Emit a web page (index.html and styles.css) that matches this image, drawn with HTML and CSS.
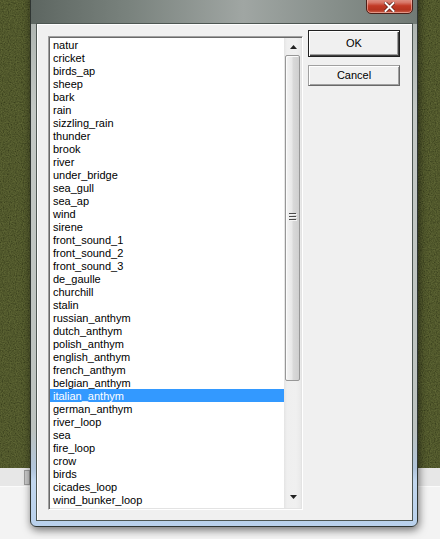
FILE: index.html
```html
<!DOCTYPE html>
<html>
<head>
<meta charset="utf-8">
<link rel="stylesheet" href="styles.css">
</head>
<body>
<svg class="ground" width="440" height="468" aria-hidden="true">
  <filter id="grain">
    <feTurbulence type="fractalNoise" baseFrequency="0.85" numOctaves="2" seed="3"/>
    <feColorMatrix type="matrix" values="0.55 0 0 0 0  0.6 0 0 0 0  0.2 0 0 0 0  0 0 0 0 1"/>
  </filter>
  <rect width="440" height="468" fill="#28300e"/>
  <rect width="440" height="468" filter="url(#grain)" opacity="0.4"/>
</svg>
<div class="behind-handle"></div>

<div class="window">
  <div class="client">
    <div class="listbox">
      <ul class="items">
        <li>natur</li>
        <li>cricket</li>
        <li>birds_ap</li>
        <li>sheep</li>
        <li>bark</li>
        <li>rain</li>
        <li>sizzling_rain</li>
        <li>thunder</li>
        <li>brook</li>
        <li>river</li>
        <li>under_bridge</li>
        <li>sea_gull</li>
        <li>sea_ap</li>
        <li>wind</li>
        <li>sirene</li>
        <li>front_sound_1</li>
        <li>front_sound_2</li>
        <li>front_sound_3</li>
        <li>de_gaulle</li>
        <li>churchill</li>
        <li>stalin</li>
        <li>russian_anthym</li>
        <li>dutch_anthym</li>
        <li>polish_anthym</li>
        <li>english_anthym</li>
        <li>french_anthym</li>
        <li>belgian_anthym</li>
        <li class="selected">italian_anthym</li>
        <li>german_anthym</li>
        <li>river_loop</li>
        <li>sea</li>
        <li>fire_loop</li>
        <li>crow</li>
        <li>birds</li>
        <li>cicades_loop</li>
        <li>wind_bunker_loop</li>
        <li>wind_bunker_inside</li>
      </ul>
      <div class="scrollbar">
        <div class="arrow">
          <svg width="7" height="4" viewBox="0 0 7 4"><polygon points="3.5,0 7,4 0,4" fill="#222"/></svg>
        </div>
        <div class="thumb">
          <svg width="8" height="9" viewBox="0 0 8 9">
            <rect x="0" y="0" width="7" height="1" fill="#4a4a4a"/>
            <rect x="1" y="1" width="7" height="1" fill="#f4f4f4"/>
            <rect x="0" y="3" width="7" height="1" fill="#4a4a4a"/>
            <rect x="1" y="4" width="7" height="1" fill="#f4f4f4"/>
            <rect x="0" y="6" width="7" height="1" fill="#4a4a4a"/>
            <rect x="1" y="7" width="7" height="1" fill="#f4f4f4"/>
          </svg>
        </div>
        <div class="track"></div>
        <div class="arrow down">
          <svg width="7" height="4" viewBox="0 0 7 4"><polygon points="0,0 7,0 3.5,4" fill="#222"/></svg>
        </div>
      </div>
    </div>
    <div class="buttons">
      <div class="btn default">OK</div>
      <div class="btn">Cancel</div>
    </div>
  </div>
</div>

<div class="close">
  <svg width="11" height="10" viewBox="0 0 11 10">
    <path d="M1.5 1 L9.5 9 M9.5 1 L1.5 9" stroke="#5a1a12" stroke-width="3.4" stroke-linecap="square"/>
    <path d="M1.5 1 L9.5 9 M9.5 1 L1.5 9" stroke="#ffffff" stroke-width="2" stroke-linecap="square"/>
  </svg>
</div>
</body>
</html>
```

FILE: styles.css
```css
html, body {
  margin: 0;
  padding: 0;
}

body {
  width: 440px;
  height: 539px;
  overflow: hidden;
  position: relative;
  font-family: "Liberation Sans", Arial, sans-serif;
  font-size: 11px;
  color: #000;
  background: linear-gradient(to bottom,
    #e7e7e7 0, #e7e7e7 486px,
    #fbfbfb 486px, #fbfbfb 487px,
    #f3f3f3 487px, #f3f3f3 100%);
}

.ground {
  position: absolute;
  left: 0;
  top: 0;
  display: block;
}

.behind-handle {
  position: absolute;
  left: 24px;
  top: 470px;
  width: 4px;
  height: 13px;
  background: #c9c9c9;
  border: 1px solid #9c9c9c;
}

.window {
  position: absolute;
  left: 30px;
  top: -10px;
  width: 388px;
  height: 537px;
  box-sizing: border-box;
  border: 1px solid #2f3532;
  border-radius: 0 0 6px 6px;
  padding: 32px 4px 5px 5px;
  background:
    linear-gradient(90deg, #5d6661 0%, #79827d 25%, #a0a6a3 55%, #8a928e 75%, #717a75 100%) top left / 100% 33px no-repeat,
    linear-gradient(to bottom, #a7aeaa 0, #c3c8c5 120px, #bcc2bf 440px, #b2c6dc 478px, #c2d7ee 490px, #b9d1ec 100%);
  box-shadow: 1px 3px 9px rgba(0, 0, 0, 0.55);
}

.client {
  box-sizing: border-box;
  height: 498px;
  border: 1px solid #4d5652;
  background: #f0f0f0;
  box-shadow: inset 1px 1px 0 #ffffff;
  display: flex;
  align-items: flex-start;
  padding: 6px 11px 0 11px;
}

.listbox {
  margin-top: 6px;
  width: 255px;
  height: 474px;
  box-sizing: border-box;
  border: 1px solid;
  border-color: #a0a0a0 #ffffff #ffffff #a0a0a0;
  box-shadow: inset 1px 1px 0 #696969, inset -1px -1px 0 #e3e3e3;
  padding: 1px;
  display: flex;
  background: #fff;
}

.items {
  list-style: none;
  margin: 0;
  padding: 0;
  flex: 1;
  overflow: hidden;
}

.items li {
  height: 13px;
  line-height: 15px;
  padding-left: 3px;
  white-space: nowrap;
  overflow: hidden;
}

.items li.selected {
  background: #3399ff;
  color: #fff;
}

.scrollbar {
  width: 17px;
  display: flex;
  flex-direction: column;
  background: linear-gradient(90deg, #e4e4e4 0, #efefef 3px, #f0f0f0 12px, #e9e9e9 100%);
}

.arrow {
  height: 17px;
  display: flex;
  align-items: center;
  justify-content: center;
  padding-left: 1px;
}

.arrow svg {
  display: block;
}

.thumb {
  height: 326px;
  margin: 0 1px 0 1px;
  box-sizing: border-box;
  border: 1px solid #979797;
  border-radius: 2px;
  background: linear-gradient(90deg, #f4f4f4 0, #e8e8e8 45%, #d9d9d9 55%, #cfcfcf 100%);
  box-shadow: inset 1px 1px 0 #fbfbfb;
  display: flex;
  align-items: center;
  justify-content: center;
  padding-bottom: 2px;
}

.thumb svg {
  display: block;
}

.track {
  flex: 1;
}

.arrow.down {
  height: 15px;
  align-items: flex-start;
  padding-top: 2px;
  box-sizing: border-box;
}

.buttons {
  margin-left: 5px;
  width: 92px;
  display: flex;
  flex-direction: column;
}

.btn {
  box-sizing: border-box;
  height: 21px;
  display: flex;
  align-items: center;
  justify-content: center;
  border: 1px solid;
  border-color: #a0a0a0 #696969 #696969 #a0a0a0;
  box-shadow: inset 1px 1px 0 #ffffff, inset -1px -1px 0 #a0a0a0;
  background: #f0f0f0;
  margin-top: 8px;
  padding-bottom: 1px;
}

.btn.default {
  margin-top: 0;
  height: 27px;
  border-color: #202020;
  box-shadow: inset 1px 1px 0 #ffffff, inset -1px -1px 0 #404040, inset -2px -2px 0 #a0a0a0;
  padding-bottom: 2px;
}

.close {
  position: absolute;
  left: 366px;
  top: -4px;
  width: 47px;
  height: 18px;
  box-sizing: border-box;
  border: 1px solid #4d1f18;
  border-radius: 0 0 5px 5px;
  background: linear-gradient(to bottom, #e4a89c 0, #d77566 35%, #c23a26 55%, #b53420 80%, #c9604a 100%);
  box-shadow: inset 0 0 0 1px rgba(255, 200, 190, 0.55);
  display: flex;
  align-items: center;
  justify-content: center;
  padding-top: 3px;
}

.close svg {
  display: block;
}
```
